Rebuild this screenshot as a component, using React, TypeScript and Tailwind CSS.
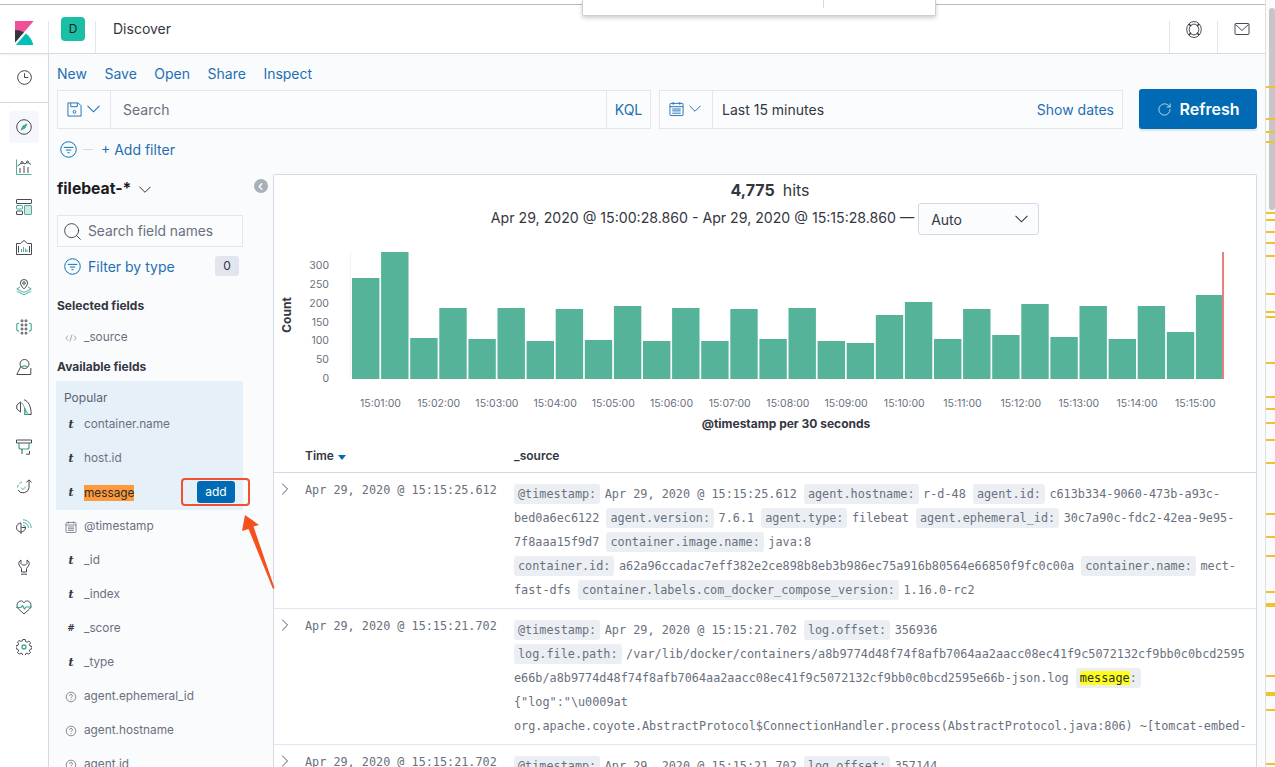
import React from 'react';
import { RotateCw, Search, ChevronRight, ChevronLeft } from 'lucide-react';

const DARK = '#343741';
const TEAL = '#3fa58e';

const Ico: React.FC<{ children: React.ReactNode; size?: number }> = ({ children, size = 16 }) => (
    <svg width={size} height={size} viewBox="0 0 16 16" fill="none" stroke={DARK} strokeWidth={0.9}>
        {children}
    </svg>
);

const Caret: React.FC<{ width?: number; color?: string; className?: string }> = ({ width = 12, color = DARK, className }) => (
    <svg width={width} height={width * 0.6} viewBox="0 0 12 7.200" fill="none" stroke={color} strokeWidth={1} className={className}>
        <path d="M.5.8 6 6.300 11.500.8" />
    </svg>
);

const navIcons: React.ReactNode[] = [
    <Ico key="discover">
        <circle cx="8" cy="8" r="7.300" />
        <path d="M11 5 9 9 5 11 7 7Z" fill={TEAL} stroke={TEAL} />
    </Ico>,
    <Ico key="visualize">
        <path d="M.5.5v15h15" stroke={TEAL} />
        <path d="M4 14V9M8 14V7M12 14V8" />
        <path d="M1.500 7 6 3.500l3 1.500 2.500-2 3.500 2.500" />
        <circle cx="6" cy="3.500" r="1" fill="#fff" />
        <circle cx="11.500" cy="3" r="1" fill="#fff" />
    </Ico>,
    <Ico key="dashboard">
        <rect x=".5" y=".5" width="15" height="4" rx="0.5" />
        <rect x=".5" y="6.500" width="6" height="3.500" rx="0.5" stroke={TEAL} />
        <rect x=".5" y="12" width="6" height="3.500" rx="0.5" />
        <rect x="8.500" y="6.500" width="7" height="9" rx="0.5" fill="#cfe9e2" stroke={TEAL} />
    </Ico>,
    <Ico key="canvas">
        <path d="M.5 4.500h4L8 1.500l3.500 3h4v11H.5Z" />
        <path d="M2.500 7v6.500M13.500 7v6.500" />
        <path d="M5.500 13v-3M7.500 13V8M9.500 13V9.500M11 13v-2.500" stroke={TEAL} />
    </Ico>,
    <Ico key="maps">
        <path d="M8 .5a3.600 3.600 0 0 1 3.600 3.600C11.600 6.500 8 10 8 10S4.400 6.500 4.400 4.100A3.600 3.600 0 0 1 8 .5Z" />
        <circle cx="8" cy="4.100" r="1.300" />
        <path d="M4 8 .8 10 8 13.500 15.200 10 12 8M.8 12.300 8 15.800l7.200-3.500" stroke={TEAL} />
    </Ico>,
    <Ico key="ml">
        <circle cx="6" cy="1.800" r="1" />
        <circle cx="10" cy="1.800" r="1" />
        <circle cx="6" cy="6" r="1" />
        <circle cx="10" cy="6" r="1" />
        <circle cx="6" cy="10" r="1" />
        <circle cx="10" cy="10" r="1" />
        <circle cx="6" cy="14.200" r="1" />
        <circle cx="10" cy="14.200" r="1" />
        <path d="M3 4 .8 5v6L3 12.500M13 4l2.200 1v6L13 12.500" stroke={TEAL} strokeWidth={1.100} />
    </Ico>,
    <Ico key="users">
        <circle cx="8.500" cy="5" r="4.500" />
        <path d="M4.800 7.500.8 15.500h14V9" />
        <path d="M5.500 8.300C6.500 6.300 10.500 6.300 11.500 8.300" stroke={TEAL} strokeWidth={1.300} />
    </Ico>,
    <Ico key="infra">
        <path d="M.8 6 4.500 3v10L.8 10Z" />
        <path d="M8 .8c4.500 1 7.200 7 7.200 14.700H8.500" />
        <path d="M4.500 3c3 2 5 7 5.500 12.500M8.500 9l4 6.500h-4Z" stroke={TEAL} />
    </Ico>,
    <Ico key="logs">
        <path d="M.5 1h15v3H.5Z" />
        <path d="M3 4v4c0 1 1 2 2 2h6c1 0 2-1 2-2V4" stroke={TEAL} strokeWidth={1.200} />
        <path d="M6 10v5M10 15.200h3.500V12" />
    </Ico>,
    <Ico key="uptime">
        <path d="M6 3A6 6 0 0 0 1.500 9" strokeDasharray="3 1.500" stroke={TEAL} />
        <path d="M13 9V1M10.300 3.500 13 .8l2.700 2.700" />
        <path d="M5 8.500 7 10.500 10 7.500" stroke={TEAL} />
        <path d="M2 11A6 6 0 0 0 13 9" />
    </Ico>,
    <Ico key="signal">
        <path d="M7 .8c4.500 0 8.200 3.700 8.200 8.200M7 3.500c3 0 5.500 2.500 5.500 5.500M7 6.300A2.700 2.700 0 0 1 9.700 9" stroke={TEAL} />
        <path d="M5.500 8.500h4a4.500 4.500 0 1 1-4.500-4.500V15" />
    </Ico>,
    <Ico key="devtools">
        <path d="M5 1C3 2 2.500 4 3 6c.5 1.500 2 2.500 2.500 3.500V13h5V9.500C11 8.500 12.500 7.500 13 6c.5-2 0-4-2-5v3.500L9.500 6h-3L5 4.500Z" />
        <path d="M5 15.200h6" />
    </Ico>,
    <Ico key="monitoring">
        <path d="M8 15 2.500 10C0 7.500.8 2.500 4.500 2c1.500-.2 2.700.5 3.500 1.800C8.800 2.500 10 1.800 11.500 2c3.700.5 4.500 5.500 2 8Z" />
        <path d="M0 8.500h5l1.500-2 2 3.500 1.500-2h6" stroke={TEAL} strokeWidth={1.200} />
    </Ico>,
    <Ico key="settings">
        <path d="M6.800.5h2.400l.4 2 1.500.7 1.800-1.100 1.600 1.700-1.100 1.700.6 1.500 2 .5v2.300l-2 .5-.6 1.500 1.100 1.700-1.600 1.700-1.800-1.100-1.500.7-.4 2H6.800l-.4-2-1.500-.7-1.800 1.100-1.600-1.700 1.100-1.700-.6-1.500-2-.5V6.800l2-.5.6-1.500-1.100-1.700 1.600-1.700 1.800 1.100 1.500-.7Z" />
        <circle cx="8" cy="8" r="2" stroke={TEAL} strokeWidth={1.300} />
    </Ico>,
];

const FilterCircle: React.FC = () => (
    <svg width="17" height="17" viewBox="0 0 16 16" fill="none" stroke="#006bb4" strokeWidth={0.9}>
        <circle cx="8" cy="8" r="7.300" />
        <path d="M3.500 6h9M5.500 8.500h5M7 11h2" />
    </svg>
);

// bar tops read off the picture, in the chart's pixel space
const barTops = [
    278, 252, 338, 308, 339, 308, 341, 309, 340, 306, 341, 308, 341, 309, 339,
    308, 341, 343, 315, 302, 339, 309, 335, 304, 337, 306, 339, 306, 332, 295,
];
const timeLabels = ['15:01:00', '15:02:00', '15:03:00', '15:04:00', '15:05:00', '15:06:00', '15:07:00', '15:08:00', '15:09:00', '15:10:00', '15:11:00', '15:12:00', '15:13:00', '15:14:00', '15:15:00'];
const yLabels: [string, number][] = [['300', 265], ['250', 284], ['200', 303], ['150', 322], ['100', 340], ['50', 359], ['0', 378]];

const Histogram: React.FC = () => (
    <svg width="982" height="200" viewBox="274 240 982 200" className="block" style={{ fontFamily: 'Inter, sans-serif' }}>
        <line x1="350.500" y1="252" x2="350.500" y2="379" stroke="#f2f3f5" />
        {barTops.map((top, i) => (
            <rect key={i} x={352 + i * 29.1} y={top} width={27.4} height={379 - top} fill="#54b399" />
        ))}
        <rect x="1222" y="252" width="2" height="127" fill="#e7807f" />
        {yLabels.map(([label, y]) => (
            <text key={label} x="329" y={y + 3.500} textAnchor="end" fontSize="10.500" fill="#69707d">{label}</text>
        ))}
        {timeLabels.map((label, i) => (
            <text key={label} x={380.500 + i * 58.2} y="407" textAnchor="middle" fontSize="10.500" fill="#69707d">{label}</text>
        ))}
        <text x="786" y="428" textAnchor="middle" fontSize="12" fontWeight="700" fill="#343741">@timestamp per 30 seconds</text>
        <text x="0" y="0" transform="translate(291 315) rotate(-90)" textAnchor="middle" fontSize="12" fontWeight="700" fill="#343741">Count</text>
    </svg>
);

type FieldType = 't' | '#' | '?' | 'date' | 'code';

const FieldIcon: React.FC<{ type: FieldType }> = ({ type }) => {
    if (type === 't') {
        return <span className="w-[12px] text-center text-[11px] font-bold italic text-[#343741] font-['DejaVu_Serif',serif]">t</span>;
    }
    if (type === '#') {
        return <span className="w-[12px] text-center text-[9px] font-bold italic text-[#343741] font-['DejaVu_Serif',serif]">#</span>;
    }
    if (type === '?') {
        return (
            <svg width="12" height="12" viewBox="0 0 12 12" fill="none" stroke="#69707d" strokeWidth={0.8}>
                <circle cx="6" cy="6" r="4.800" />
                <path d="M4.500 4.800C4.500 3 7.500 3 7.500 4.800 7.500 6 6 5.800 6 7.200M6 8.200v.9" />
            </svg>
        );
    }
    if (type === 'date') {
        return (
            <svg width="12" height="12" viewBox="0 0 12 12" fill="none" stroke="#69707d" strokeWidth={0.8}>
                <rect x="1" y="1.500" width="10" height="10" rx="1" />
                <path d="M1 4h10M3.500.5v2M8.500.5v2M3 6h6M3 7.700h6M3 9.400h6" />
            </svg>
        );
    }
    return (
        <svg width="12" height="12" viewBox="0 0 12 12" fill="none" stroke="#8a909b" strokeWidth={0.8}>
            <path d="M3 3.500.8 6 3 8.500M9 3.500 11.200 6 9 8.500M7 2.500 5 9.500" />
        </svg>
    );
};

const FieldRow: React.FC<{ type: FieldType; name: string; children?: React.ReactNode; highlight?: boolean }> = ({ type, name, highlight, children }) => (
    <div className="flex h-[34px] items-center pl-[8px] text-[11.8px] text-[#69707d]">
        <span className="flex w-[19px] shrink-0 items-center"><FieldIcon type={type} /></span>
        {highlight ? <span className="mb-[1px] bg-[#ff9a3c] text-[#2b2b2b] leading-[16px]">{name}</span> : <span>{name}</span>}
        {children}
    </div>
);

const K: React.FC<{ children: React.ReactNode }> = ({ children }) => (
    <span className="mr-[4.500px] whitespace-nowrap rounded-[3px] bg-[#ebeff4] px-[4px] py-[3px] text-[#69707d]">{children}</span>
);

const DocRow: React.FC<{ time: string; children: React.ReactNode }> = ({ time, children }) => (
    <div className="flex h-[136px] border-b border-[#e3e6ef]">
        <div className="flex w-[31px] shrink-0 pl-[1px] pt-[6px]">
            <ChevronRight size={20} strokeWidth={1} color="#343741" />
        </div>
        <div className="w-[209px] shrink-0 pt-[8px] font-['DejaVu_Sans_Mono',monospace] text-[11.8px] leading-[18px] text-[#69707d]">{time}</div>
        <div className="h-[129px] w-[734px] overflow-hidden pt-[9px] font-['DejaVu_Sans_Mono',monospace] text-[11.82px] leading-[24px] text-[#69707d] [overflow-wrap:anywhere]">
            {children}
        </div>
    </div>
);

const scrollMarks: [number, number][] = [
    [86, 2], [118, 2], [131, 2], [141, 2], [212, 2], [219, 2], [231, 2], [242, 2], [255, 2], [293, 2], [311, 2], [316, 2],
    [362, 2], [396, 2], [408, 2], [422, 2], [439, 2], [462, 2], [513, 2], [536, 2], [555, 2], [591, 2], [603, 4], [675, 2],
    [692, 4], [709, 2], [763, 2],
];

const App: React.FC = () => {
    return (
        <div className="relative flex h-[767px] w-full overflow-hidden bg-white font-['Inter',sans-serif] text-[#343741]">
            <div className="flex w-[1265px] shrink-0 flex-col">
                {/* top chrome */}
                <div className="h-[5px] shrink-0 border-b border-[#bdbdbd]" />
                <header className="flex h-[49px] shrink-0 items-stretch border-b border-[#d3dae6] shadow-[0_1px_3px_rgba(0,0,0,0.06)]">
                    <div className="flex w-[48px] shrink-0 items-center justify-center pt-[7px]">
                        <svg width="24" height="24" viewBox="0 0 32 32">
                            <path fill="#F04E98" d="M4 0v28.789L28.935.017z" />
                            <path fill="#343741" d="M4 12v16.789l11.906-13.738A24.721 24.721 0 0 0 4 12" />
                            <path fill="#00BFB3" d="M18.479 16.664L6.268 30.754l-1.073 1.237h23.191c-1.252-6.292-4.883-11.719-9.908-15.327" />
                        </svg>
                    </div>
                    <div className="mt-[16px] flex w-[48px] shrink-0 border-x border-[#e3e6ef]">
                        <div className="mt-[-4px] ml-[12px] flex h-[24px] w-[24px] items-center justify-center rounded-[4px] bg-[#1abfa6] text-[12px] text-[#1a1c21]">D</div>
                    </div>
                    <div className="flex-1 pl-[17px] pt-[14px] text-[14px] leading-[20px]">Discover</div>
                    <div className="mt-[16px] flex w-[48px] shrink-0 justify-center border-l border-[#e3e6ef]">
                        <svg width="16" height="17" viewBox="0 0 16 17" fill="none" stroke="#343741" strokeWidth={0.9}>
                            <ellipse cx="8" cy="8.500" rx="7.300" ry="8" />
                            <ellipse cx="8" cy="8.500" rx="4.800" ry="5.400" />
                            <path d="M3 3 5 5.200M13 3l-2 2.200M3 14l2-2.200M13 14l-2-2.200" strokeWidth={1.400} />
                        </svg>
                    </div>
                    <div className="mt-[16px] flex w-[48px] shrink-0 justify-center border-l border-[#e3e6ef]">
                        <svg width="16" height="16" viewBox="0 0 16 16" fill="none" stroke="#343741" strokeWidth={0.9}>
                            <rect x="1" y="2.500" width="14" height="11" rx="1" />
                            <path d="M1.500 3.500 8 9.500l6.500-6" />
                        </svg>
                    </div>
                </header>

                <div className="flex min-h-0 flex-1">
                    {/* app nav */}
                    <nav className="flex w-[49px] shrink-0 flex-col border-r border-[#d3dae6]">
                        <div className="flex h-[49px] shrink-0 items-center justify-center border-b border-[#d3dae6] pb-[2px]">
                            <svg width="15" height="15" viewBox="0 0 16 16" fill="none" stroke="#343741" strokeWidth={1}>
                                <circle cx="8" cy="8" r="7.300" />
                                <path d="M8 3.500V8h4" />
                            </svg>
                        </div>
                        <div className="flex flex-col items-center pt-[4px] pr-[1px]">
                            {navIcons.map((icon, i) => (
                                <div key={i} className="flex h-[40px] w-[30px] items-center justify-center">
                                    {i === 0 ? <div className="flex h-[32px] w-[30px] items-center justify-center rounded-[4px] bg-[#f5f7fa]">{icon}</div> : icon}
                                </div>
                            ))}
                        </div>
                    </nav>

                    <main className="flex min-w-0 flex-1 flex-col bg-[#fafbfd] px-[8px]">
                        <div className="mt-[9px] flex h-[20px] shrink-0 items-center gap-[17.500px] text-[14px] text-[#1f6fb2]">
                            <span>New</span>
                            <span>Save</span>
                            <span>Open</span>
                            <span>Share</span>
                            <span>Inspect</span>
                        </div>

                        {/* query + time */}
                        <div className="mt-[6px] flex h-[40px] shrink-0 items-center">
                            <div className="flex h-[39px] w-[594px] shrink-0 items-stretch border border-[#e3e6ef] bg-[#fbfcfd]">
                                <div className="flex w-[53px] shrink-0 items-center gap-[5px] border-r border-[#e3e6ef] pl-[9px]">
                                    <svg width="15" height="15" viewBox="0 0 16 16" fill="none" stroke="#1f6fb2" strokeWidth={1}>
                                        <path d="M1 1h11l3 3v11H1Z" />
                                        <path d="M4 1v4h7V1" />
                                        <circle cx="8" cy="10.500" r="1.500" />
                                    </svg>
                                    <Caret width={13} color="#1f6fb2" />
                                </div>
                                <div className="flex flex-1 items-center pl-[12px] text-[14px] text-[#69707d]">Search</div>
                                <div className="flex w-[44px] shrink-0 items-center justify-center border-l border-[#e3e6ef] text-[14px] text-[#1f6fb2]">KQL</div>
                            </div>
                            <div className="ml-[8px] flex h-[39px] w-[464px] shrink-0 items-stretch border border-[#e3e6ef] bg-[#fbfcfd]">
                                <div className="flex w-[53px] shrink-0 items-center gap-[5px] border-r border-[#e3e6ef] pl-[9px]">
                                    <svg width="15" height="16" viewBox="0 0 16 16" fill="none" stroke="#1f6fb2" strokeWidth={1}>
                                        <rect x="1" y="2" width="14" height="13" rx="1" />
                                        <path d="M1 5.500h14M4.500 0.500v3M11.500 0.500v3M3.500 8h9M3.500 10h9M3.500 12.500h9" />
                                    </svg>
                                    <Caret width={12} color="#1f6fb2" />
                                </div>
                                <div className="flex flex-1 items-center pl-[9px] text-[14px] text-[#343741]">Last 15 minutes</div>
                                <div className="flex items-center pr-[8px] text-[14px] text-[#1f6fb2]">Show dates</div>
                            </div>
                            <div className="ml-[16px] flex h-[40px] w-[118px] shrink-0 items-center justify-center gap-[8px] rounded-[3px] bg-[#006bb4] text-[16px] font-semibold text-white shadow-[0_2px_2px_rgba(0,0,0,0.1)]">
                                <RotateCw size={15} strokeWidth={1.100} color="#fff" />
                                <span>Refresh</span>
                            </div>
                        </div>

                        {/* filter bar */}
                        <div className="mt-[10px] flex h-[20px] shrink-0 items-center pl-[3px] text-[14px] text-[#1f6fb2]">
                            <FilterCircle />
                            <span className="ml-[6px] h-[1px] w-[10px] bg-[#d3dae6]" />
                            <span className="ml-[8px]">+ Add filter</span>
                        </div>

                        <div className="mt-[15px] flex min-h-0 flex-1">
                            {/* field sidebar */}
                            <aside className="w-[186px] shrink-0 pt-[1px]">
                                <div className="flex h-[28px] items-center text-[15.700px] font-bold text-[#1a1c21]">
                                    filebeat-*
                                    <Caret width={12} className="ml-[8px] mt-[2px]" />
                                </div>
                                <div className="mt-[12px] flex h-[32px] items-center border border-[#e3e6ef] bg-[#fbfcfd] pl-[4px] text-[13.800px] text-[#69707d]">
                                    <Search size={21} strokeWidth={1} color="#343741" />
                                    <span className="ml-[5px]">Search field names</span>
                                </div>
                                <div className="mt-[9px] flex h-[20px] items-center pl-[7px] text-[14px] text-[#1f6fb2]">
                                    <FilterCircle />
                                    <span className="ml-[7px]">Filter by type</span>
                                    <span className="ml-auto mr-[4px] flex h-[20px] w-[24px] items-center justify-center rounded-[3px] bg-[#e0e5ee] text-[12px] text-[#343741]">0</span>
                                </div>
                                <div className="mt-[21px] h-[18px] text-[12px] font-bold leading-[18px]">Selected fields</div>
                                <div className="mt-[6px]">
                                    <FieldRow type="code" name="_source" />
                                </div>
                                <div className="mt-[3px] h-[18px] text-[12px] font-bold leading-[18px]">Available fields</div>
                                <div className="mt-[5px] ml-[-1px] h-[129px] w-[187px] bg-[#e6f0f8]">
                                    <div className="flex h-[27px] items-end pb-[1px] pl-[8px] text-[12px] text-[#5a6270]">Popular</div>
                                    <div className="pl-[1px]">
                                        <FieldRow type="t" name="container.name" />
                                        <FieldRow type="t" name="host.id" />
                                        <FieldRow type="t" name="message" highlight>
                                            <span className="ml-auto mr-[8px] mt-[-2px] flex h-[22px] w-[38px] items-center justify-center rounded-[3px] bg-[#006bb4] text-[12px] text-white">add</span>
                                        </FieldRow>
                                    </div>
                                </div>
                                <FieldRow type="date" name="@timestamp" />
                                <FieldRow type="t" name="_id" />
                                <FieldRow type="t" name="_index" />
                                <FieldRow type="#" name="_score" />
                                <FieldRow type="t" name="_type" />
                                <FieldRow type="?" name="agent.ephemeral_id" />
                                <FieldRow type="?" name="agent.hostname" />
                                <FieldRow type="?" name="agent.id" />
                            </aside>

                            <div className="flex w-[30px] shrink-0 justify-center pt-[5px] pl-[6px]">
                                <span className="flex h-[14px] w-[14px] items-center justify-center rounded-full bg-[#a9afb9]">
                                    <ChevronLeft size={11} strokeWidth={3} color="#fff" className="mr-[1px]" />
                                </span>
                            </div>

                            {/* results */}
                            <section className="min-w-0 flex-1 rounded-t-[2px] border border-b-0 border-[#d3dae6] bg-white">
                                <div className="flex h-[28px] items-center justify-center pl-[10px] pt-[1px]">
                                    <b className="mr-[8px] text-[16px] font-bold">4,775</b>
                                    <span className="text-[16px]">hits</span>
                                </div>
                                <div className="flex h-[32px] items-center justify-center text-[14px]">
                                    <span className="mt-[-3px] text-[14.150px]">Apr 29, 2020 @ 15:00:28.860 - Apr 29, 2020 @ 15:15:28.860 —</span>
                                    <div className="ml-[4px] flex h-[32px] w-[121px] items-center justify-between rounded-[3px] border border-[#d3dae6] bg-[#fbfcfd] pl-[12px] pr-[10px]">
                                        Auto
                                        <Caret width={13} />
                                    </div>
                                </div>
                                <div className="mt-[5px]">
                                    <Histogram />
                                </div>
                                <div className="flex h-[33px] items-center border-b border-[#d3dae6] text-[12px] font-semibold">
                                    <span className="ml-[31px] flex w-[209px] items-center">
                                        Time
                                        <svg width="8" height="5" viewBox="0 0 8 5" className="ml-[4px] mt-[3px]"><path d="M0 0h8L4 5Z" fill="#006bb4" /></svg>
                                    </span>
                                    <span>_source</span>
                                </div>
                                <DocRow time="Apr 29, 2020 @ 15:15:25.612">
                                    <K>@timestamp:</K>Apr 29, 2020 @ 15:15:25.612{' '}
                                    <K>agent.hostname:</K>r-d-48{' '}
                                    <K>agent.id:</K>c613b334-9060-473b-a93c-bed0a6ec6122{' '}
                                    <K>agent.version:</K>7.6.1{' '}
                                    <K>agent.type:</K>filebeat{' '}
                                    <K>agent.ephemeral_id:</K>30c7a90c-fdc2-42ea-9e95-7f8aaa15f9d7{' '}
                                    <K>container.image.name:</K>java:8{' '}
                                    <K>container.id:</K>a62a96ccadac7eff382e2ce898b8eb3b986ec75a916b80564e66850f9fc0c00a{' '}
                                    <K>container.name:</K>mect-fast-dfs{' '}
                                    <K>container.labels.com_docker_compose_version:</K>1.16.0-rc2
                                </DocRow>
                                <DocRow time="Apr 29, 2020 @ 15:15:21.702">
                                    <K>@timestamp:</K>Apr 29, 2020 @ 15:15:21.702{' '}
                                    <K>log.offset:</K>356936{' '}
                                    <K>log.file.path:</K>/var/lib/docker/containers/a8b9774d48f74f8afb7064aa2aacc08ec41f9c5072132cf9bb0c0bcd2595e66b/a8b9774d48f74f8afb7064aa2aacc08ec41f9c5072132cf9bb0c0bcd2595e66b-json.log{' '}
                                    <K><span className="bg-[#ffff1a] text-[#2b2b2b]">message</span>:</K>{'{"log":"\\u0009at '}
                                    org.apache.coyote.AbstractProtocol$ConnectionHandler.process(AbstractProtocol.java:806) ~[tomcat-embed-core-9.0.31.jar:9.0.31]
                                </DocRow>
                                <DocRow time="Apr 29, 2020 @ 15:15:21.702">
                                    <K>@timestamp:</K>Apr 29, 2020 @ 15:15:21.702{' '}
                                    <K>log.offset:</K>357144
                                </DocRow>
                            </section>
                        </div>
                    </main>
                </div>
            </div>

            {/* overview ruler next to the page scrollbar */}
            <div className="relative w-[10px] shrink-0 border-l border-[#e0e0e0] bg-[#fbfbfb]">
                <div className="absolute left-[3px] top-[8px] h-[202px] w-[6px] rounded-[3px] bg-[#c6c6c6]" />
                {scrollMarks.map(([y, h]) => (
                    <div key={y} className="absolute left-0 right-0 bg-[#eec32c]" style={{ top: y, height: h }} />
                ))}
            </div>

            {/* popover peeking from the top of the window */}
            <div className="absolute left-[582px] top-0 h-[16px] w-[354px] rounded-b-[2px] border border-t-0 border-[#cfcfcf] bg-white shadow-[0_2px_4px_rgba(0,0,0,0.2)]">
                <div className="absolute left-[240px] top-0 h-[8px] w-[1px] bg-[#d3dae6]" />
            </div>

            {/* annotation added over the screenshot */}
            <div className="absolute left-[181px] top-[478px] h-[28px] w-[69px] rounded-[4px] border-2 border-[#f0522d]" />
            <svg className="absolute left-[240px] top-[510px]" width="40" height="84" viewBox="240 510 40 84">
                <path d="M245 515 259 525 253.500 526.500 274.500 588 273 589 248.500 529 242 531Z" fill="#f4511e" />
            </svg>
        </div>
    );
};

export default App;
